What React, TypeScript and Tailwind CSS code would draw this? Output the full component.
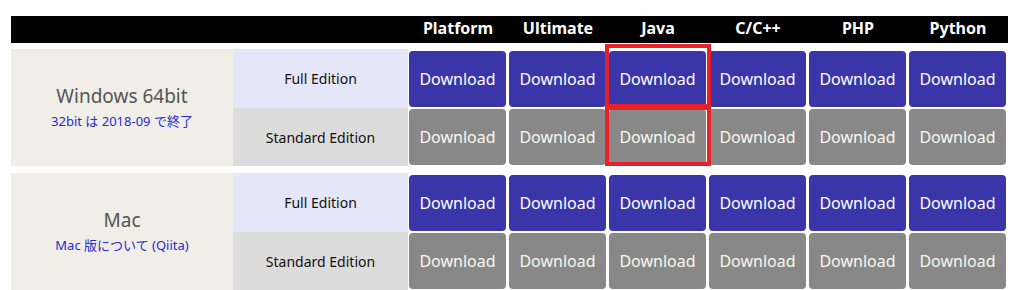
import React from 'react';

const langs = ['Platform', 'Ultimate', 'Java', 'C/C++', 'PHP', 'Python'];

type Group = {
    os: string;
    note: string;
};

const groups: Group[] = [
    { os: 'Windows 64bit', note: '32bit は 2018-09 で終了' },
    { os: 'Mac', note: 'Mac 版について (Qiita)' },
];

const ButtonRow = ({ label, full, first }: { label: string; full: boolean; first: boolean }) => (
    <div className={`flex ${first ? 'h-[59px]' : 'h-[58px]'}`}>
        <div
            className={`w-[175px] flex items-center justify-center text-[14px] text-[#111] ${full ? 'bg-[#e6e6fa]' : 'bg-[#dcdcdc]'}`}
        >
            {label}
        </div>
        {langs.map((l) => (
            <div key={l} className={`w-[100px] pl-px pr-[2px] ${first ? 'pt-[2px] pb-px' : 'py-px'}`}>
                <a
                    href="#"
                    className={`h-full w-[97px] rounded-[4px] flex items-center justify-center text-[16px] ${full ? 'bg-[#3a35a8] text-white' : 'bg-[#888888] text-[#f8f8ee]'}`}
                >
                    Download
                </a>
            </div>
        ))}
    </div>
);

export default function App() {
    return (
        <div
            className="bg-white w-[1025px] h-[290px] overflow-hidden pt-4 pl-[11px]"
            style={{ fontFamily: '"Noto Sans", "Noto Sans CJK JP", sans-serif' }}
        >
            <div className="relative w-[997px]">
                {/* header */}
                <div className="flex h-[27px] bg-black text-white font-bold text-[16px] leading-none">
                    <div className="w-[397px]" />
                    {langs.map((l) => (
                        <div key={l} className="w-[100px] flex items-center justify-center pb-[3px]">
                            {l}
                        </div>
                    ))}
                </div>

                <div className="flex flex-col gap-[7px] mt-[6px]">
                    {groups.map((g) => (
                        <div key={g.os} className="flex">
                            <div className="w-[222px] bg-[#f0eee7] flex flex-col items-center justify-center">
                                <span className="text-[19px] text-[#555] leading-6">{g.os}</span>
                                <a href="#" className="text-[13px] text-[#2a2ad0] mt-[3px] leading-5">
                                    {g.note}
                                </a>
                            </div>
                            <div className="flex flex-col">
                                <ButtonRow label="Full Edition" full first />
                                <ButtonRow label="Standard Edition" full={false} first={false} />
                            </div>
                        </div>
                    ))}
                </div>

                {/* highlight on Java column */}
                <div className="absolute left-[594px] top-[28px] w-[106px] h-[64px] border-4 border-[#e8202a]" />
                <div className="absolute left-[594px] top-[90px] w-[106px] h-[60px] border-4 border-[#e8202a]" />
            </div>
        </div>
    );
}
